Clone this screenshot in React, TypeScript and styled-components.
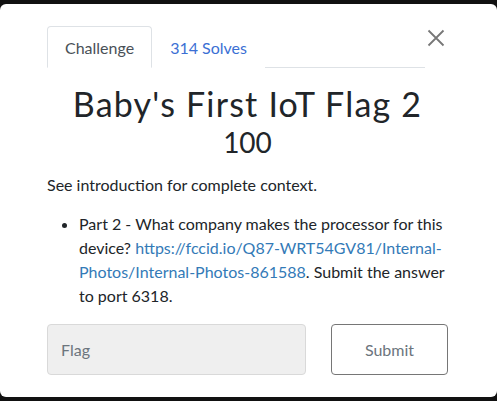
import React from "react";
import styled, { createGlobalStyle } from "styled-components";

const Global = createGlobalStyle`
  html, body { margin: 0; padding: 0; background: #111; }
  body { font-family: Lato, "Noto Sans", sans-serif; color: #212529; }
  * { box-sizing: border-box; }
`;

const Page = styled.div`
  height: 401px;
  padding: 4px 0;
  overflow: hidden;
`;

const Modal = styled.div`
  position: relative;
  height: 393px;
  background: #fff;
  border-radius: 6px;
  padding: 22px 49px 0 47px;
`;

const Close = styled.button`
  position: absolute;
  top: 23px;
  right: 50px;
  width: 22px;
  height: 22px;
  padding: 0;
  border: none;
  background: transparent;
  display: flex;
  align-items: center;
  justify-content: center;
`;

const Tabs = styled.div`
  display: flex;
  border-bottom: 1px solid #dee2e6;
  margin-right: 23px;
  height: 42px;
`;

const Tab = styled.div<{ $active?: boolean }>`
  padding: 0 17px;
  height: 42px;
  display: flex;
  align-items: center;
  font-size: 16px;
  color: ${(p) => (p.$active ? "#495057" : "#3b6fd4")};
  border: 1px solid ${(p) => (p.$active ? "#dee2e6" : "transparent")};
  border-bottom-color: ${(p) => (p.$active ? "#fff" : "transparent")};
  border-radius: 4px 4px 0 0;
  margin-bottom: -1px;
  background: #fff;
`;

const Title = styled.h2`
  margin: 16px 0 0;
  text-align: center;
  font-weight: 400;
  font-size: 34px;
  line-height: 40px;
  letter-spacing: 1.2px;
  color: #212529;
`;

const Points = styled.h3`
  margin: 0;
  text-align: center;
  font-weight: 400;
  font-size: 28px;
  line-height: 36px;
`;

const Desc = styled.p`
  margin: 13px 0 0;
  font-size: 16px;
  line-height: 24px;
`;

const List = styled.ul`
  margin: 15px 0 0;
  padding-left: 32px;
  font-size: 16px;
  line-height: 24px;
`;

const Link = styled.a`
  color: #337ab7;
  text-decoration: none;
`;

const Form = styled.div`
  display: grid;
  grid-template-columns: 259px 117px;
  column-gap: 25px;
  margin-top: 16px;
`;

const Input = styled.input`
  height: 51px;
  border: 1px solid #d9d9d9;
  border-radius: 4px;
  background: #efefef;
  padding: 0 13px;
  font-family: Lato, sans-serif;
  font-size: 16px;
  color: #495057;
  outline: none;
  &::placeholder { color: #6c757d; }
`;

const Submit = styled.button`
  height: 51px;
  border: 1px solid #767676;
  border-radius: 4px;
  background: #fff;
  font-family: Lato, sans-serif;
  font-size: 16px;
  color: #6c757d;
`;

export default function App() {
  return (
    <>
      <Global />
      <Page>
        <Modal>
          <Close aria-label="Close">
            <svg width="18" height="18" viewBox="0 0 18 18">
              <path d="M1.5 1.5 L16.5 16.5 M16.5 1.5 L1.5 16.5" stroke="#777" strokeWidth="1.8" />
            </svg>
          </Close>
          <Tabs>
            <Tab $active>Challenge</Tab>
            <Tab>314 Solves</Tab>
          </Tabs>
          <Title>Baby's First IoT Flag 2</Title>
          <Points>100</Points>
          <Desc>See introduction for complete context.</Desc>
          <List>
            <li>
              Part 2 - What company makes the processor for this device?{" "}
              <Link href="#">https://fccid.io/Q87-WRT54GV81/Internal-Photos/Internal-Photos-861588</Link>. Submit the answer to port 6318.
            </li>
          </List>
          <Form>
            <Input placeholder="Flag" />
            <Submit>Submit</Submit>
          </Form>
        </Modal>
      </Page>
    </>
  );
}
